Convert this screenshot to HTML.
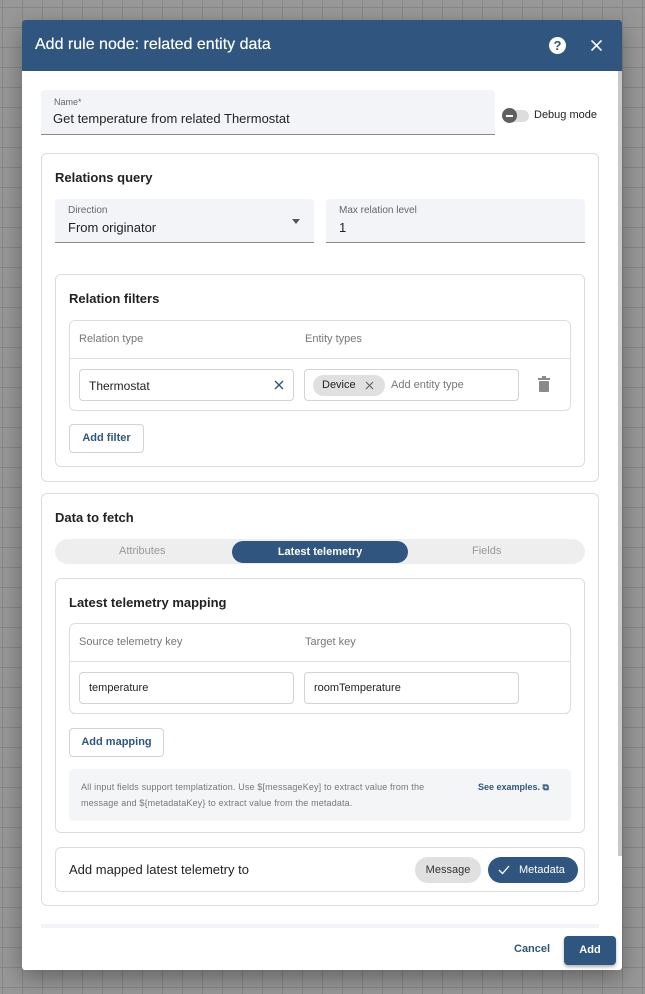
<!DOCTYPE html>
<html><head><meta charset="utf-8"><style>
*{box-sizing:border-box;margin:0;padding:0}
body{width:645px;height:994px;overflow:hidden;font-family:"Liberation Sans",sans-serif;background-color:#989898;background-image:linear-gradient(90deg,#878787 1px,transparent 1px),linear-gradient(#878787 1px,transparent 1px);background-size:20px 20px;background-position:2px 7px;position:relative}
.a{position:absolute}
.dlg{left:22px;top:20px;width:600px;height:950px;background:#fff;border-radius:3px;box-shadow:0 8px 24px rgba(0,0,0,.35);overflow:hidden}
.hdr{left:0;top:0;width:600px;height:51px;background:#305680;color:#fff;font-size:16px}
.box{border:1px solid #dcdcdc;border-radius:6px;background:#fff}
.fill{background:#f3f4f7;border-bottom:1px solid #8a8a8a;border-radius:4px 4px 0 0}
.lbl{font-size:10px;color:#666}
.val{font-size:13px;color:#222}
.t{font-size:13px;font-weight:bold;color:#222}
.in{border:1px solid #d3d3d3;border-radius:4px;background:#fff}
.btn{border:1px solid #d3d3d3;border-radius:4px;font-size:11px;font-weight:bold;color:#305680;text-align:center}
.sm{font-size:11px;color:#777}
</style></head><body>
<div class="a dlg">
 <div class="a hdr"><span class="a" style="left:13px;top:16px;text-shadow:0 0 .4px #fff">Add rule node: related entity data</span>
  <div class="a" style="left:527px;top:17px;width:17px;height:17px;border-radius:50%;background:#fff;color:#305680;font-size:13px;font-weight:bold;text-align:center;line-height:17px">?</div>
  <svg class="a" style="left:569px;top:20px" width="11" height="11"><path d="M.5 .5L10.5 10.5M10.5 .5L.5 10.5" stroke="#fff" stroke-width="1.6"/></svg>
 </div>
 <div class="a" style="left:596px;top:51px;width:4px;height:785px;background:#c8c8c8"></div>
 <div class="a fill" style="left:19px;top:70px;width:454px;height:45px"><span class="a lbl" style="left:13px;top:7px;font-size:9px">Name*</span><span class="a val" style="left:12px;top:21px">Get temperature from related Thermostat</span></div>
 <div class="a" style="left:481px;top:90px;width:26px;height:12px;border-radius:6px;background:#ddd"></div>
 <div class="a" style="left:480px;top:88px;width:15px;height:15px;border-radius:50%;background:#5f5f5f"><div class="a" style="left:4px;top:7px;width:7px;height:1.5px;background:#fff"></div></div>
 <span class="a" style="left:512px;top:89px;font-size:11px;color:#222">Debug mode</span>

 <div class="a box" style="left:19px;top:133px;width:558px;height:329px"></div>
 <span class="a t" style="left:33px;top:150px">Relations query</span>
 <div class="a fill" style="left:33px;top:179px;width:259px;height:44px"><span class="a lbl" style="left:13px;top:6px">Direction</span><span class="a val" style="left:13px;top:21px">From originator</span><div class="a" style="left:237px;top:20px;border:4px solid transparent;border-top:5px solid #555"></div></div>
 <div class="a fill" style="left:304px;top:179px;width:259px;height:44px"><span class="a lbl" style="left:13px;top:6px">Max relation level</span><span class="a val" style="left:13px;top:21px">1</span></div>
 <div class="a box" style="left:33px;top:254px;width:530px;height:193px"></div>
 <span class="a t" style="left:47px;top:271px">Relation filters</span>
 <div class="a box" style="left:47px;top:300px;width:502px;height:91px"></div>
 <div class="a" style="left:48px;top:338px;width:500px;height:1px;background:#e0e0e0"></div>
 <span class="a sm" style="left:57px;top:313px">Relation type</span><span class="a sm" style="left:283px;top:313px">Entity types</span>
 <div class="a in" style="left:57px;top:349px;width:215px;height:32px"><span class="a" style="left:9px;top:9px;font-size:12px;color:#222">Thermostat</span><svg class="a" style="left:194px;top:10px" width="10" height="10"><path d="M1 1L9 9M9 1L1 9" stroke="#305680" stroke-width="1.4"/></svg></div>
 <div class="a in" style="left:282px;top:349px;width:215px;height:32px"><div class="a" style="left:8px;top:5px;width:72px;height:21px;border-radius:11px;background:#e0e0e0"><span class="a" style="left:9px;top:4px;font-size:11px;color:#222">Device</span><svg class="a" style="left:52px;top:6px" width="9" height="9"><path d="M1 1L8 8M8 1L1 8" stroke="#666" stroke-width="1.2"/></svg></div><span class="a" style="left:86px;top:9px;font-size:11px;color:#777">Add entity type</span></div>
 <svg class="a" style="left:516px;top:356px" width="12" height="16"><rect x="0" y="2" width="12" height="2" fill="#8a8a8a"/><rect x="4" y="0" width="4" height="2" fill="#8a8a8a"/><rect x="1" y="5" width="10" height="11" rx="1" fill="#8a8a8a"/></svg>
 <div class="a btn" style="left:47px;top:404px;width:75px;height:29px;line-height:27px">Add filter</div>

 <div class="a box" style="left:19px;top:473px;width:558px;height:413px"></div>
 <span class="a t" style="left:33px;top:490px">Data to fetch</span>
 <div class="a" style="left:33px;top:519px;width:530px;height:25px;border-radius:13px;background:#eee"></div>
 <span class="a" style="left:97px;top:525px;font-size:11px;color:#999">Attributes</span>
 <div class="a" style="left:210px;top:521px;width:176px;height:22px;border-radius:11px;background:#305680;color:#fff;font-size:11px;font-weight:bold;text-align:center;line-height:22px">Latest telemetry</div>
 <span class="a" style="left:450px;top:525px;font-size:11px;color:#999">Fields</span>
 <div class="a box" style="left:33px;top:558px;width:530px;height:255px"></div>
 <span class="a t" style="left:47px;top:575px">Latest telemetry mapping</span>
 <div class="a box" style="left:47px;top:603px;width:502px;height:91px"></div>
 <div class="a" style="left:48px;top:641px;width:500px;height:1px;background:#e0e0e0"></div>
 <span class="a sm" style="left:57px;top:616px">Source telemetry key</span><span class="a sm" style="left:283px;top:616px">Target key</span>
 <div class="a in" style="left:57px;top:652px;width:215px;height:32px"><span class="a" style="left:9px;top:9px;font-size:11px;color:#222">temperature</span></div>
 <div class="a in" style="left:282px;top:652px;width:215px;height:32px"><span class="a" style="left:9px;top:9px;font-size:11px;color:#222">roomTemperature</span></div>
 <div class="a btn" style="left:47px;top:708px;width:95px;height:29px;line-height:27px">Add mapping</div>
 <div class="a" style="left:47px;top:749px;width:502px;height:52px;background:#f4f5f7;border-radius:4px"></div>
 <span class="a" style="left:59px;top:759px;font-size:9px;color:#777;line-height:16px;width:370px;letter-spacing:.15px">All input fields support templatization. Use $[messageKey] to extract value from the message and ${metadataKey} to extract value from the metadata.</span>
 <span class="a" style="left:456px;top:762px;font-size:9px;font-weight:bold;color:#305680">See examples. ⧉</span>
 <div class="a box" style="left:33px;top:827px;width:530px;height:45px"></div>
 <span class="a" style="left:47px;top:842px;font-size:13px;color:#222">Add mapped latest telemetry to</span>
 <div class="a" style="left:393px;top:837px;width:66px;height:26px;border-radius:13px;background:#e0e0e0;font-size:11px;color:#333;text-align:center;line-height:26px">Message</div>
 <div class="a" style="left:466px;top:837px;width:90px;height:26px;border-radius:13px;background:#305680;font-size:11px;color:#fff;line-height:26px"><svg class="a" style="left:10px;top:8px" width="12" height="10"><path d="M1 5L4.5 8.5L11 1" stroke="#fff" stroke-width="1.3" fill="none"/></svg><span class="a" style="left:31px;top:0">Metadata</span></div>
 <div class="a" style="left:19px;top:904px;width:558px;height:4px;background:#f3f4f7"></div>
 <span class="a" style="left:492px;top:923px;font-size:11px;font-weight:bold;color:#305680">Cancel</span>
 <div class="a" style="left:542px;top:916px;width:52px;height:29px;border-radius:4px;background:#305680;color:#fff;font-size:11px;font-weight:bold;text-align:center;line-height:29px;box-shadow:0 2px 3px rgba(0,0,0,.3)">Add</div>
</div>
</body></html>
